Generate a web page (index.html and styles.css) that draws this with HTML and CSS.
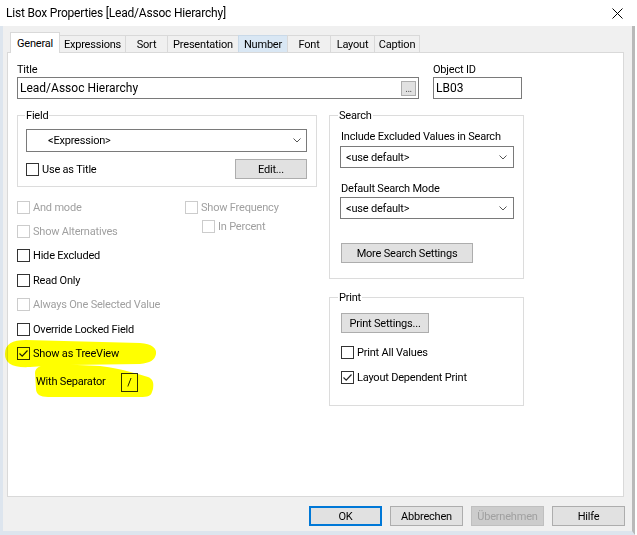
FILE: index.html
```html
<!DOCTYPE html>
<html>
<head>
<meta charset="utf-8">
<link rel="stylesheet" href="styles.css">
</head>
<body>
<div class="window">
  <div class="titlebar">
    <span class="caption-text">List Box Properties [Lead/Assoc Hierarchy]</span>
    <svg class="close" width="11" height="11" viewBox="0 0 11 11"><path d="M0.5 0.5 L10.5 10.5 M10.5 0.5 L0.5 10.5" stroke="#000" stroke-width="1" fill="none"/></svg>
  </div>
  <div class="frame">
    <div class="client">
      <div class="tabs">
        <div class="tab active t-general">General</div>
        <div class="tab t-expr">Expressions</div>
        <div class="tab t-sort">Sort</div>
        <div class="tab t-pres">Presentation</div>
        <div class="tab hover t-num">Number</div>
        <div class="tab t-font">Font</div>
        <div class="tab t-layout">Layout</div>
        <div class="tab t-cap">Caption</div>
      </div>
      <div class="panel">
        <div class="top-row">
          <div class="title-field">
            <div class="lbl">Title</div>
            <div class="textbox">
              <span class="tb-text">Lead/Assoc Hierarchy</span>
              <span class="dots">...</span>
            </div>
          </div>
          <div class="oid-field">
            <div class="lbl">Object ID</div>
            <div class="textbox oid"><span class="tb-text">LB03</span></div>
          </div>
        </div>
        <div class="cols">
          <div class="col-left">
            <fieldset class="grp grp-field">
              <legend>Field</legend>
              <div class="select sel-field">
                <span>&lt;Expression&gt;</span>
                <svg class="chev" width="8" height="5" viewBox="0 0 8 5"><path d="M0.5 0.5 L4 4 L7.5 0.5" stroke="#555" stroke-width="1" fill="none"/></svg>
              </div>
              <div class="field-row">
                <label class="cb"><span class="box"></span>Use as Title</label>
                <div class="btn btn-edit">Edit...</div>
              </div>
            </fieldset>
            <div class="opts">
              <div class="opts-left">
                <label class="cb opt-row disabled"><span class="box"></span>And mode</label>
                <label class="cb opt-row disabled"><span class="box"></span>Show Alternatives</label>
                <label class="cb opt-row"><span class="box"></span>Hide Excluded</label>
                <label class="cb opt-row"><span class="box"></span>Read Only</label>
                <label class="cb opt-row disabled"><span class="box"></span>Always One Selected Value</label>
                <label class="cb opt-row"><span class="box"></span>Override Locked Field</label>
                <label class="cb opt-row"><span class="box"><svg width="11" height="11" viewBox="0 0 11 11"><path d="M1.5 5.5 L4.2 8.2 L9.5 2.5" stroke="#222" stroke-width="1.2" fill="none"/></svg></span>Show as TreeView</label>
                <div class="sep-row">
                  <span class="sep-lbl">With Separator</span>
                  <span class="sep-box">/</span>
                </div>
              </div>
              <div class="opts-right">
                <label class="cb opt-row disabled"><span class="box"></span>Show Frequency</label>
                <label class="cb pct-row disabled"><span class="box"></span>In Percent</label>
              </div>
            </div>
          </div>
          <div class="col-right">
            <fieldset class="grp grp-search">
              <legend>Search</legend>
              <div class="lbl-s">Include Excluded Values in Search</div>
              <div class="select sel-s">
                <span>&lt;use default&gt;</span>
                <svg class="chev" width="8" height="5" viewBox="0 0 8 5"><path d="M0.5 0.5 L4 4 L7.5 0.5" stroke="#555" stroke-width="1" fill="none"/></svg>
              </div>
              <div class="lbl-s lbl-s2">Default Search Mode</div>
              <div class="select sel-s sel-s2">
                <span>&lt;use default&gt;</span>
                <svg class="chev" width="8" height="5" viewBox="0 0 8 5"><path d="M0.5 0.5 L4 4 L7.5 0.5" stroke="#555" stroke-width="1" fill="none"/></svg>
              </div>
              <div class="btn btn-more">More Search Settings</div>
            </fieldset>
            <fieldset class="grp grp-print">
              <legend>Print</legend>
              <div class="btn btn-print">Print Settings...</div>
              <div class="print-opts">
                <label class="cb pr-row"><span class="box"></span>Print All Values</label>
                <label class="cb pr-row"><span class="box"><svg width="11" height="11" viewBox="0 0 11 11"><path d="M1.5 5.5 L4.2 8.2 L9.5 2.5" stroke="#222" stroke-width="1.2" fill="none"/></svg></span>Layout Dependent Print</label>
              </div>
            </fieldset>
          </div>
        </div>
      </div>
      <div class="actions">
        <div class="btn dlg default">OK</div>
        <div class="btn dlg">Abbrechen</div>
        <div class="btn dlg off">Übernehmen</div>
        <div class="btn dlg">Hilfe</div>
      </div>
    </div>
  </div>
  <svg class="marker" width="165" height="70" viewBox="0 0 165 70">
    <path fill="#ffff00" d="M5 19 C5 9 12 5 26 5 L140 8 C152 9 157 13 156 19 C155 25 150 28 140 29 L70 30 C50 31 40 31 30 32 C12 33 5 28 5 19 Z"/>
    <path fill="#ffff00" d="M35 38 C35 32 42 29 55 29 L100 31 C125 34 140 40 148 42 C153 44 154 48 153 54 L152 57 C151 61 148 62 140 62 L48 62 C40 62 36 59 36 54 Z"/>
  </svg>
</div>
</body>
</html>
```
FILE: styles.css
```css
* { box-sizing: border-box; }
body {
  margin: 0;
  font-family: Roboto, "Liberation Sans", sans-serif;
  font-size: 11px;
  letter-spacing: -0.2px;
  color: #000;
}
.window {
  position: relative;
  width: 637px;
  height: 535px;
  display: flex;
  flex-direction: column;
  background: #fff;
  overflow: hidden;
}
.titlebar {
  height: 26px;
  flex: none;
  display: flex;
  align-items: center;
  justify-content: space-between;
  padding: 0 14px 0 6px;
  background: #fff;
  font-size: 12px;
}
.close { display: block; }
.frame { flex: 1; display: flex; min-height: 0; }
.client {
  width: 635px;
  background: #f0f0f0;
  border-left: 3px solid #dde5ee;
  border-bottom: 4px solid #dde5ee;
  border-right: 3px solid #b9b9b9;
  display: flex;
  flex-direction: column;
  padding: 6px 0 5px 4px;
}
.tabs {
  display: flex;
  align-items: flex-end;
  height: 20px;
  flex: none;
  padding-left: 3px;
}
.tab {
  height: 17px;
  border: 1px solid #d9d9d9;
  border-bottom: none;
  margin-left: -1px;
  background: #f0f0f0;
  display: flex;
  align-items: center;
  justify-content: center;
  line-height: 15px;
  white-space: nowrap;
}
.tab:first-child { margin-left: 0; }
.tab.active {
  height: 21px;
  background: #fff;
  margin-bottom: -1px;
  position: relative;
  z-index: 1;
}
.tab.hover { background: #d9e7f4; border-color: #c9d9e8; }
.t-general { width: 50px; }
.t-expr { width: 67px; }
.t-sort { width: 43px; }
.t-pres { width: 72px; }
.t-num { width: 50px; }
.t-font { width: 44px; }
.t-layout { width: 45px; }
.t-cap { width: 46px; }
.panel {
  flex: 1;
  background: #fff;
  border: 1px solid #d9d9d9;
  margin-right: 8px;
  padding: 9px 0 0 9px;
  white-space: nowrap;
}
.top-row { display: flex; gap: 14px; }
.title-field { width: 402px; }
.oid-field { width: 89px; }
.lbl { line-height: 15px; }
.textbox {
  height: 22px;
  border: 1px solid #7a7a7a;
  display: flex;
  align-items: center;
  justify-content: space-between;
  padding: 0 2px 0 2px;
  line-height: 15px;
  font-size: 12px;
  letter-spacing: 0;
}
.dots {
  width: 15px;
  height: 15px;
  background: #e1e1e1;
  border: 1px solid #adadad;
  font-size: 10px;
  line-height: 14px;
  color: #555;
  text-align: center;
  letter-spacing: -0.5px;
}
.cols { display: flex; gap: 12px; margin-top: 9px; }
.col-left { width: 300px; }
.col-right { width: 195px; }
.grp {
  margin: 0;
  border: 1px solid #dcdcdc;
  min-width: 0;
}
.grp legend { padding: 0 1px; line-height: 15px; }
.grp-field { padding: 6px 9px 7px 8px; }
.grp-field legend { margin-left: -1px; }
.select {
  background: #fff;
  border: 1px solid #7a7a7a;
  display: flex;
  align-items: center;
  justify-content: space-between;
  line-height: 15px;
}
.chev { display: block; }
.sel-field { height: 23px; padding: 0 5px 0 21px; }
.field-row {
  display: flex;
  justify-content: space-between;
  align-items: center;
  height: 20px;
  margin-top: 7px;
}
.cb {
  display: flex;
  align-items: center;
  line-height: 15px;
  white-space: nowrap;
}
.box {
  width: 13px;
  height: 13px;
  border: 1px solid #333;
  background: #fff;
  margin-right: 3px;
  flex: none;
  display: flex;
  align-items: center;
  justify-content: center;
}
.box svg { display: block; }
.cb.disabled { color: #a0a0a0; }
.cb.disabled .box { border-color: #cccccc; }
.btn {
  background: #e1e1e1;
  border: 1px solid #adadad;
  display: flex;
  align-items: center;
  justify-content: center;
  height: 20px;
  line-height: 15px;
  white-space: nowrap;
}
.btn-edit { width: 72px; }
.opts { display: flex; margin-top: 8px; }
.opts-left { width: 168px; }
.opt-row { height: 24.4px; }
.pct-row { height: 15px; margin-left: 17px; }
.sep-row {
  display: flex;
  align-items: center;
  height: 20px;
  margin-top: 7px;
  padding-left: 19px;
}
.sep-lbl { width: 85px; line-height: 15px; margin-top: -3px; }
.sep-box {
  width: 17px;
  height: 19px;
  border: 1px solid #333;
  display: flex;
  align-items: center;
  justify-content: center;
  background: #fff;
}
.grp-search { padding: 6px 9px 15px 10px; }
.grp-search legend { margin-left: -2px; }
.lbl-s { line-height: 15px; padding-left: 1px; }
.lbl-s2 { margin-top: 13px; }
.sel-s { height: 22px; margin-top: 2px; padding: 0 6px 0 5px; }
.sel-s2 { margin-top: 1px; }
.btn-more { width: 132px; margin-top: 24px; margin-left: 1px; }
.grp-print { margin-top: 11px; padding: 8px 9px 15px 11px; }
.grp-print legend { margin-left: -3px; }
.btn-print { width: 88px; }
.print-opts { margin-top: 7px; }
.pr-row { height: 25px; }
.actions {
  display: flex;
  justify-content: flex-end;
  gap: 8px;
  margin-top: 9px;
  margin-right: 7px;
  flex: none;
}
.dlg { width: 73px; }
.dlg.default { border-color: #0078d7; box-shadow: inset 0 0 0 1px #0078d7; }
.dlg.off { background: #cccccc; border-color: #bfbfbf; color: #a0a0a0; }
.marker {
  position: absolute;
  left: 0;
  top: 335px;
  mix-blend-mode: multiply;
  pointer-events: none;
}
```
